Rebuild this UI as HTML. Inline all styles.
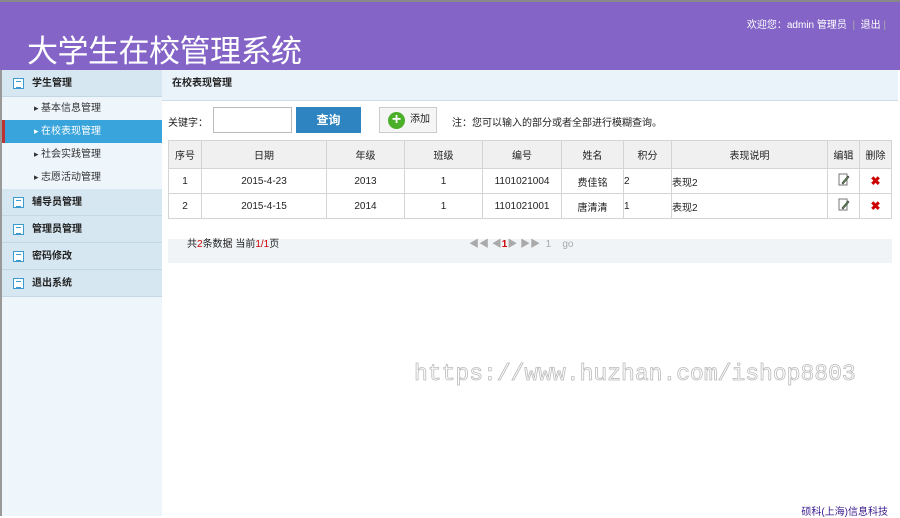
<!DOCTYPE html>
<html><head><meta charset="utf-8"><style>
*{margin:0;padding:0;box-sizing:border-box}
body{width:900px;height:516px;overflow:hidden;background:#fff;font-family:"Liberation Sans","Noto Sans CJK SC",sans-serif;font-size:10px;color:#222;position:relative}
.hd{position:absolute;left:0;top:0;width:900px;height:70px;background:#8465c7;border-top:2px solid #888}
.hd h1{position:absolute;left:27px;top:24px;font-size:31px;font-weight:normal;color:#fff;letter-spacing:-0.5px;font-family:"Noto Sans CJK SC",sans-serif}
.hd .r{position:absolute;right:14px;top:14px;color:#fff;font-size:10px}
.sb{position:absolute;left:0;top:70px;width:162px;height:446px;background:#eef6fc;border-left:2px solid #999}
.g{height:27px;background:#d7e7f1;border-bottom:1px solid #c4d7e4;font-weight:bold;font-size:10px;line-height:27px;padding-left:30px;position:relative}
.g i{position:absolute;left:11px;top:8px;width:11px;height:11px;border:1px solid #3b9ad0;background:#fff}
.g i:after{content:"";position:absolute;left:2px;top:2px;width:5px;height:5px;border-top:1px solid #3b9ad0;border-bottom:1px solid #3b9ad0}
.s{height:23px;line-height:23px;padding-left:32px;font-size:10px;color:#333}
.s:before{content:"▸ ";font-size:9px}
.s.a{background:#38a4db;color:#fff;border-left:3px solid #b33;padding-left:29px}
.ct{position:absolute;left:162px;top:70px;width:736px;height:446px}
.tt{height:31px;background:#eaf3fa;border-bottom:1px solid #cfdde8;font-weight:bold;line-height:28px;padding-left:10px}
.lbl{position:absolute;left:6px;top:44px}
.inp{position:absolute;left:51px;top:37px;width:79px;height:26px;border:1px solid #bbb;background:#fff}
.btn{position:absolute;left:134px;top:37px;width:65px;height:26px;background:#2d84c0;color:#fff;font-size:12px;font-weight:bold;text-align:center;line-height:26px}
.add{position:absolute;left:217px;top:37px;width:58px;height:26px;border:1px solid #ccc;background:#f5f5f5;line-height:24px;padding-left:30px}
.add b{position:absolute;left:8px;top:4px;width:17px;height:17px;border-radius:50%;background:#4caf2a;color:#fff;font-size:16px;line-height:16px;text-align:center}
.note{position:absolute;left:290px;top:44px}
table{position:absolute;left:6px;top:70px;border-collapse:collapse;width:724px}
td,th{border:1px solid #d4d4d4;height:25px;text-align:center;font-size:10px;font-weight:normal}
th{background:#f0f0f0;height:28px}
.pg{position:absolute;left:6px;top:169px;width:724px;height:24px;background:#f0f4f7;padding-left:19px;line-height:10px;padding-top:1px}
.red{color:#c00}
.wm{position:absolute;left:414px;top:361px;font-family:"Liberation Mono",monospace;font-size:23px;color:#fff;-webkit-text-stroke:0.8px #bbb;letter-spacing:0}
.ft{position:absolute;right:12px;bottom:-2px;color:#3a1b8c;font-size:10px}
</style></head><body>
<div class="hd"><h1>大学生在校管理系统</h1><div class="r">欢迎您：admin 管理员 <span style="color:#aaa">&nbsp;|&nbsp;</span> 退出 <span style="color:#aaa">|</span></div></div>
<div class="sb">
<div class="g"><i></i>学生管理</div>
<div class="s">基本信息管理</div><div class="s a">在校表现管理</div><div class="s">社会实践管理</div><div class="s">志愿活动管理</div>
<div class="g"><i></i>辅导员管理</div><div class="g"><i></i>管理员管理</div><div class="g"><i></i>密码修改</div><div class="g"><i></i>退出系统</div>
</div>
<div class="ct">
<div class="tt">在校表现管理</div>
<div class="lbl">关键字：</div><div class="inp"></div><div class="btn">查询</div>
<div class="add"><b>+</b>添加</div>
<div class="note">注：您可以输入的部分或者全部进行模糊查询。</div>
<table>
<tr><th style="width:33px">序号</th><th style="width:125px">日期</th><th style="width:78px">年级</th><th style="width:78px">班级</th><th style="width:79px">编号</th><th style="width:62px">姓名</th><th style="width:48px">积分</th><th style="width:156px">表现说明</th><th style="width:32px">编辑</th><th>删除</th></tr>
<tr><td>1</td><td>2015-4-23</td><td>2013</td><td>1</td><td>1101021004</td><td>费佳铭</td><td style="text-align:left">2</td><td style="text-align:left">表现2</td><td><svg width="12" height="13" viewBox="0 0 12 13"><rect x="1" y="1" width="8" height="11" fill="#fff" stroke="#777"/><path d="M4 10 L10 3 L11 4 L5 11 Z" fill="#6a5" stroke="#333" stroke-width=".6"/></svg></td><td style="color:#c00;font-weight:bold;font-size:12px">✖</td></tr>
<tr><td>2</td><td>2015-4-15</td><td>2014</td><td>1</td><td>1101021001</td><td>唐清清</td><td style="text-align:left">1</td><td style="text-align:left">表现2</td><td><svg width="12" height="13" viewBox="0 0 12 13"><rect x="1" y="1" width="8" height="11" fill="#fff" stroke="#777"/><path d="M4 10 L10 3 L11 4 L5 11 Z" fill="#6a5" stroke="#333" stroke-width=".6"/></svg></td><td style="color:#c00;font-weight:bold;font-size:12px">✖</td></tr>
</table>
<div class="pg">共<span class="red">2</span>条数据 当前<span class="red">1/1</span>页<span style="position:absolute;left:301px;top:1px;color:#aaa">◀◀ ◀<b class="red">1</b>▶ ▶▶ &nbsp;1 &nbsp; &nbsp;go</span></div>
</div>
<div class="wm">https://www.huzhan.com/ishop8803</div>
<div class="ft">硕科(上海)信息科技</div>
</body></html>
